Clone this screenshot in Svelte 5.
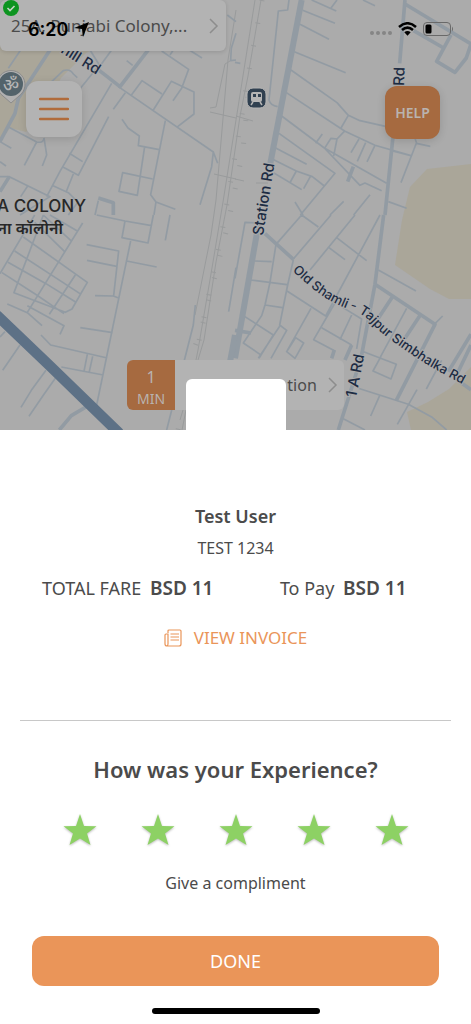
<script>
  let rating = 5;
  const stars = [1, 2, 3, 4, 5];
</script>

<main>
  <section class="map-area">
    <svg class="map" viewBox="0 0 471 430" preserveAspectRatio="xMidYMin slice" role="img" aria-label="Map of Punjabi Colony">
      <!-- built-up areas -->
      <g class="land">
        <path d="M0 40H110L86 53 61 78 46 110 26 132 10 128 0 142Z" />
        <path d="M427 169 471 164V299L449 299 430 289 395 265 402 220 410 187Z" />
        <path d="M471 367V430H411L407 412 428 402 449 389Z" />
      </g>

      <!-- railway -->
      <g class="rail">
        <path d="M255 0 236 120 223 202 213 262 198 350 182 430M261 0 248 76 240 116 227 205 216 262 204 340 180 420" />
        <path d="M236 10 228 60 216 200 211 235 195 315M230 61 225 64 216 107 210 108M210 112 236 118M236 116 253 121M214 174 236 179M235 179 244 181M256 183 268 183" />
        <path class="sleepers" d="M262 0 248 76 240 127 222 232 196 355 178 430" />
        <path class="sleepers" d="M248 97 243 150 228 224 202 327 190 360" />
      </g>

      <g transform="scale(.3333)">
        <path class="road" d="M25 205 62 150M0 424 45 340 55 295 150 150M155 245 190 212Q210 205 220 222L232 233M270 150 300 198 335 150M290 205 242 264M335 250 180 514 140 590M376 278 340 328M355 260 640 456 635 500 600 614M640 456 653 490M392 288 426 242 486 282M460 330 514 244 582 276V342L530 382M485 153 566 208 545 265 519 302M510 165 520 150M568 150 606 174M380 182 398 196M366 358 384 384 418 408 415 437 478 449M434 440 412 586 357 574 368 518 458 537M496 362 452 584 468 606 526 628M468 606 462 645M326 350 235 526 190 502M208 460 248 485M220 522 198 577M156 556 205 578 234 606 205 645M0 425 34 445M24 380 110 426Q130 430 132 414M132 414 140 465 127 498M110 426 73 496M0 485 18 498M0 530H28L150 590 60 645M83 558 62 590M285 645 295 602M708 180 692 182 694 145 708 100M682 45 708 65" />
        <path class="road wide" d="M0 424 45 340 55 295 150 150M290 205 360 260 445 150M28 530 0 575M295 594 340 608V645" />
      </g>

      <g transform="translate(235) scale(.3333)">
        <path class="road" d="M162 0 158 30 130 33 102 300Q106 316 128 320M230 0 304 33M306 0 288 24M203 31 300 70M195 73 282 118M178 155 332 218M168 210 306 308 340 346 375 362 455 380M340 346 318 384M154 278 330 394 420 436 528 467M140 348 268 444 375 556 390 549 440 572M268 444 455 550M132 400 300 520 196 645M122 444 215 493M110 476 184 513 232 530 268 558M112 516 200 569M184 513 166 546M226 530 206 566M262 402 242 430M328 394 306 417 288 415 268 446M306 417 296 468M372 417 348 458M392 428 367 484M420 436 396 486M470 452 528 467M544 430 498 548M540 415 545 430 586 439M405 584 356 645M326 604 285 645M180 606 204 645M460 605 515 625M384 0 420 17M0 187 16 190" />
        <path class="road wide" d="M510 0 494 190M510 12 708 132 694 174 660 217 605 184 648 105M536 92 626 144M355 500 338 545M474 410 450 645" />
        <path class="road main" d="M200 0 106 490" />
      </g>

      <g transform="translate(0 215) scale(.3333)">
        <path class="road" d="M290 0 375 18 455 32M375 18 366 68 444 84 460 0M392 78 290 570M260 89 356 108 341 242M261 136 350 154M285 242 340 243 358 250M380 138 470 156M241 338 338 353M123 360 152 390 322 429M184 456 310 480M262 418 252 469M278 424 268 470M510 0 496 76M708 158 686 290M586 270 580 330 500 645M0 176 104 0M6 173 110 240 192 296M24 142 138 206 228 262M44 108 240 236M70 66 262 202 216 282 196 292 42 233 130 0M248 24 82 292M104 22 194 110M130 0 216 80M150 0 232 48M226 180 148 298M22 267 82 293 126 332M82 272 192 332 180 358M15 350 0 366M60 390 8 466M138 466 94 526 63 577M166 490 132 538 87 604" />
        <path class="road wide" d="M268 570 214 602 178 645" />
        <path class="highway" d="M-10 300 150 453 358 655" />
      </g>

      <g transform="translate(235 215) scale(.3333)">
        <path class="road" d="M0 190 30 22 72 24M288 0 175 132M200 0 250 36M200 0 123 88 105 202 90 270 80 302 25 384 75 418M60 138 110 140M46 195 156 209M90 270 142 278M175 135 158 210 134 330 155 346 108 430M134 334 70 430M25 302 115 360 72 430M156 228 272 303 435 0M360 0 225 165M305 68 395 137M282 98 330 134M228 280 155 410 180 430 206 384 182 368 154 412M300 264 236 374 300 408M260 338 350 390M350 300 315 374M324 278 380 312 365 402M430 165 543 228M380 408 484 448 468 492 414 468 438 424M515 280 434 430M594 332 623 303M370 520 520 568 590 606 635 645M434 542 407 603M546 524 487 628M322 610 390 645M620 436 574 522" />
        <path class="road wide" d="M90 56 176 134M446 0 420 208 378 430 310 645M420 208 600 328 484 556M476 240 430 310M556 300 510 370M708 358 640 470M708 390 665 480M350 390 330 435M298 405 290 430M0 346 48 354M660 490 708 524" />
        <path class="road main" d="M70 30 0 430" />
        <path id="shamli-road" d="M172 166C235 230 285 262 345 284Q380 292 410 324C440 360 490 390 540 425S640 484 690 512" fill="none" />
        <text class="street path-label"><textPath href="#shamli-road">Old Shamli - Tajpur Simbhalka Rd</textPath></text>
      </g>
      <path class="road main" d="M235 335 230 362" />

      <text class="street" transform="translate(60 52) rotate(32)">nill Rd</text>
      <text class="street" transform="translate(263 236) rotate(-81)">Station Rd</text>
      <text class="street" transform="translate(404 86) rotate(-88)">Rd</text>
      <text class="street" transform="translate(356 398) rotate(-79)">1 A Rd</text>
      <text class="district" x="86" y="212" text-anchor="end">A COLONY</text>
      <text class="hindi" x="63" y="234" text-anchor="end">ना कॉलोनी</text>

      <!-- temple pin -->
      <path d="M11 103 3 96A14 14 0 1 1 19 96Z" fill="#b1b1b1" stroke="#8c8c8c" />
      <circle cx="11" cy="84" r="12" fill="#53636b" />
      <text x="11" y="91" text-anchor="middle" class="om">ॐ</text>

      <!-- railway station -->
      <rect x="247" y="88" width="19" height="20" rx="6" fill="#304050" stroke="#b5b5b5" />
      <rect x="251" y="92" width="11" height="10" rx="2" fill="#b5b5b5" />
      <path d="M253 94h3v3h-3zM258 94h3v3h-3z" fill="#304050" />
      <path d="M253 102 251 105M260 102 262 105" stroke="#b5b5b5" stroke-width="1.5" />
    </svg>

    <button class="address">
      <span>25A, Punjabi Colony,...</span>
      <svg width="10" height="16" viewBox="0 0 10 16"><path d="M1 1 8 8 1 15" /></svg>
    </button>
    <svg class="check" viewBox="0 0 16 16" width="16" height="16">
      <circle cx="8" cy="8" r="8" fill="#0d9420" />
      <path d="M4.5 8 7 10.5 11.5 6" fill="none" stroke="#c5d5c5" stroke-width="1.6" />
    </svg>

    <div class="status-bar">
      <div class="clock">
        <span>6:20</span>
        <svg width="15" height="15" viewBox="0 0 15 15"><path d="M15 0 9 15 8 7 0 6Z" /></svg>
      </div>
      <div class="signals">
        <svg class="dots" width="22" height="4" viewBox="0 0 22 4">
          <circle cx="2" cy="2" r="2" /><circle cx="8" cy="2" r="2" /><circle cx="14" cy="2" r="2" /><circle cx="20" cy="2" r="2" />
        </svg>
        <svg width="19" height="14" viewBox="0 0 19 14">
          <path d="M1 5Q9.500-2.500 18 5M4 8Q9.500 3.200 15 8" fill="none" stroke="#000" stroke-width="2.500" />
          <path d="M6.300 10.300Q9.500 7.800 12.700 10.300L9.500 13.700Z" />
        </svg>
        <svg width="31" height="14" viewBox="0 0 31 14">
          <rect x=".5" y=".5" width="27" height="13" rx="3.500" fill="none" stroke="#696969" />
          <rect x="2.500" y="2.500" width="6" height="9" rx="1.500" />
          <path d="M29 4.500Q31 7 29 9.500Z" fill="#696969" />
        </svg>
      </div>
    </div>

    <button class="menu" aria-label="Menu">
      <svg width="30" height="24" viewBox="0 0 30 24"><path d="M1 2H29M1 12H29M1 22H29" /></svg>
    </button>
    <button class="help">HELP</button>

    <button class="destination">
      <span class="eta"><span>1</span><small>MIN</small></span>
      <span class="place">tion</span>
      <svg width="10" height="16" viewBox="0 0 10 16"><path d="M1 1 8 8 1 15" /></svg>
    </button>
  </section>

  <section class="sheet">
    <div class="avatar"></div>
    <h1>Test User</h1>
    <p class="plate">TEST 1234</p>
    <div class="fares">
      <p>TOTAL FARE <strong>BSD 11</strong></p>
      <p>To Pay <strong>BSD 11</strong></p>
    </div>
    <button class="invoice">
      <svg width="18" height="18" viewBox="0 0 18 18">
        <path d="M4 4V2Q4 1 5 1H16Q17 1 17 2V15Q17 17 15 17H3Q1 17 1 15V6Q1 5 2 5H4V15Q4 17 2.500 17M6.500 5H15M6.500 8H15M6.500 11H15" />
      </svg>
      VIEW INVOICE
    </button>

    <hr />

    <h2>How was your Experience?</h2>
    <div class="stars">
      {#each stars as star}
        <button aria-label="{star} stars" on:click={() => (rating = star)}>
          <svg class:off={star > rating} width="34" height="33" viewBox="0 0 34 33">
            <path d="M17 0 21 12 33.500 12.200 24 19.500 27.500 31 17 24.500 6.500 31 10 19.500 .5 12.200 13 12Z" />
          </svg>
        </button>
      {/each}
    </div>
    <button class="compliment">Give a compliment</button>
    <button class="done">DONE</button>
    <div class="home-bar"></div>
  </section>
</main>

<style>
  :global(body) {
    margin: 0;
    background: #fff;
  }

  main {
    min-height: 100vh;
    display: flex;
    flex-direction: column;
    font-family: "Noto Sans", sans-serif;
    color: #4b4b4b;
  }

  button {
    border: 0;
    padding: 0;
    background: none;
    font: inherit;
    color: inherit;
    cursor: pointer;
  }

  h1,
  h2,
  p {
    margin: 0;
  }

  .map-area {
    position: relative;
    height: 42vh;
    overflow: hidden;
    background: #ababab;
  }

  .map {
    position: absolute;
    top: 0;
    left: 0;
    width: 100%;
  }

  .land {
    fill: #aaa699;
  }

  .rail {
    fill: none;
    stroke: #999b9c;
    stroke-width: 1;
  }

  .rail .sleepers {
    stroke-width: 5;
    stroke-dasharray: 1 22;
  }

  .road {
    fill: none;
    stroke: #929ba3;
    stroke-width: 5;
    stroke-linejoin: round;
  }

  .road.wide {
    stroke-width: 11;
  }

  .road.main {
    stroke-width: 18;
  }

  .map > .road.main {
    stroke-width: 6;
  }

  .highway {
    fill: none;
    stroke: #5d7186;
    stroke-width: 32;
  }

  .street {
    font: 500 15px Inter, sans-serif;
    fill: #1d2c43;
    stroke: #ababab;
    stroke-width: 2px;
    paint-order: stroke;
  }

  .path-label {
    font-size: 39px;
    stroke-width: 6px;
  }

  .district {
    font: 500 17px Inter, sans-serif;
    fill: #282828;
  }

  .hindi {
    font: 600 16px "Noto Sans", "Noto Sans Devanagari", sans-serif;
    fill: #282828;
  }

  .om {
    font: 500 17px "Noto Sans", sans-serif;
    fill: #b5b5b5;
  }

  .address {
    position: absolute;
    top: 0;
    left: 0;
    width: 48%;
    height: 51px;
    padding: 0 7px 0 11px;
    display: flex;
    align-items: center;
    justify-content: space-between;
    border-radius: 6px;
    background: #b3b3b3;
    box-shadow: 0 1px 4px #0002;
    font-size: 17px;
    white-space: nowrap;
  }

  .address path,
  .destination path {
    fill: none;
    stroke: #8d8d8d;
    stroke-width: 1.5;
  }

  .check {
    position: absolute;
    top: 0;
    left: 3px;
  }

  .status-bar {
    position: absolute;
    top: 18px;
    left: 28px;
    right: 17px;
    height: 22px;
    display: flex;
    align-items: center;
    justify-content: space-between;
    pointer-events: none;
  }

  .clock,
  .signals {
    display: flex;
    align-items: center;
    gap: 6px;
  }

  .clock {
    font: 600 18px Inter, sans-serif;
    color: #000;
  }

  .dots {
    margin-top: 8px;
    fill: #858585;
  }

  .menu,
  .help {
    position: absolute;
    display: flex;
    align-items: center;
    justify-content: center;
    border-radius: 12px;
    box-shadow: 0 2px 8px #0002;
  }

  .menu {
    top: 81px;
    left: 26px;
    width: 56px;
    height: 56px;
    background: #b3b3b3;
  }

  .menu path {
    stroke: #b06b3b;
    stroke-width: 2.5;
    stroke-linecap: round;
  }

  .help {
    top: 86px;
    right: 31px;
    width: 55px;
    height: 53px;
    background: #a66a40;
    color: #b9b3af;
    font-size: 14px;
    font-weight: 600;
  }

  .destination {
    position: absolute;
    top: 360px;
    left: 27%;
    width: 46%;
    height: 50px;
    display: flex;
    align-items: center;
    padding-right: 6px;
    gap: 11px;
    border-radius: 6px;
    overflow: hidden;
    background: #b3b3b3;
    font-size: 16px;
  }

  .eta {
    width: 48px;
    height: 50px;
    padding-top: 6px;
    box-sizing: border-box;
    display: flex;
    flex-direction: column;
    justify-content: space-between;
    background: #a66a40;
    color: #b9b3af;
    font-size: 16px;
    line-height: 22px;
  }

  .eta small {
    font-size: 14px;
  }

  .place {
    flex: 1;
    text-align: right;
  }

  .sheet {
    position: relative;
    flex: 1;
    padding: 74px 20px 10px;
    display: flex;
    flex-direction: column;
    align-items: center;
    background: #fff;
  }

  .avatar {
    position: absolute;
    top: -51px;
    left: 50%;
    width: 100px;
    height: 100px;
    margin-left: -50px;
    border-radius: 6px;
    background: #fff;
  }

  h1 {
    font-size: 18px;
    font-weight: 600;
    line-height: 24px;
  }

  .plate {
    margin-top: 10px;
    font-size: 16px;
    line-height: 20px;
  }

  .fares {
    width: 100%;
    margin-top: 18px;
    display: grid;
    grid-template-columns: 1fr 1fr;
    text-align: center;
    font-size: 18px;
    line-height: 24px;
  }

  .fares strong {
    margin-left: 4px;
    font-size: 19px;
    font-weight: 600;
  }

  .invoice {
    margin-top: 26px;
    display: flex;
    align-items: center;
    gap: 12px;
    color: #ea9559;
    font-size: 17px;
    line-height: 24px;
  }

  .invoice path {
    fill: none;
    stroke: #ea9559;
    stroke-width: 1.2;
  }

  hr {
    width: 100%;
    margin: 70px 0 33px;
    border: 0;
    border-top: 1px solid #c8c8c8;
  }

  h2 {
    font-size: 22px;
    font-weight: 600;
    line-height: 30px;
  }

  .stars {
    width: 100%;
    max-width: 390px;
    margin-top: 30px;
    display: grid;
    grid-template-columns: repeat(5, 1fr);
  }

  .stars button {
    display: flex;
    justify-content: center;
  }

  .stars svg {
    fill: #8dd164;
    filter: drop-shadow(0 1px 1px #0004);
  }

  .stars .off {
    fill: #ddd;
  }

  .compliment {
    margin-top: 26px;
    font-size: 16px;
    line-height: 20px;
  }

  .done {
    width: calc(100% - 24px);
    height: 50px;
    margin-top: 43px;
    border-radius: 12px;
    background: #ea9559;
    color: #fff;
    font-size: 18px;
  }

  .home-bar {
    width: 168px;
    height: 6px;
    margin-top: auto;
    border-radius: 3px;
    background: #000;
  }
</style>
